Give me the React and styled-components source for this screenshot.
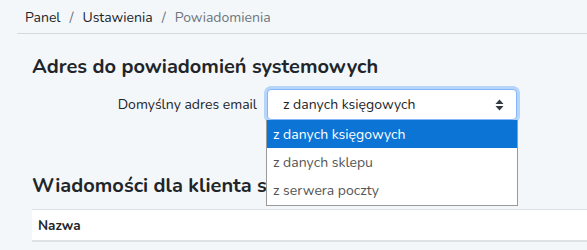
import React from "react";
import styled, { createGlobalStyle } from "styled-components";

const GlobalStyle = createGlobalStyle`
  html, body {
    margin: 0;
    padding: 0;
    background: #f4f7fa;
    font-family: "Nunito", "Noto Sans", "Open Sans", sans-serif;
    color: #212529;
    overflow: hidden;
  }
`;

const Page = styled.div`
  width: 587px;
  height: 250px;
  overflow: hidden;
`;

const Breadcrumb = styled.nav`
  margin-left: 17px;
  height: 32px;
  padding-left: 8px;
  display: flex;
  align-items: center;
  gap: 8px;
  font-size: 14px;
  border-bottom: 1px solid #d5d9de;
  padding-top: 1px;
`;

const Crumb = styled.span`
  color: ${(p) => (p.$active ? "#6c757d" : "#212529")};
`;

const Sep = styled.span`
  color: #6c757d;
  padding: 0 1px;
`;

const Content = styled.div`
  padding-left: 32px;
`;

const Heading = styled.h2`
  margin: 0;
  font-size: 20px;
  font-weight: 700;
  line-height: 24px;
  color: #212529;
  padding-top: ${(p) => p.$top}px;
  white-space: nowrap;
`;

const FormRow = styled.div`
  display: flex;
  align-items: center;
  gap: 10px;
  margin-top: 10px;
`;

const Label = styled.label`
  width: 225px;
  text-align: right;
  font-size: 14px;
  color: #212529;
`;

const SelectWrap = styled.div`
  position: relative;
  width: 250px;
`;

const SelectBox = styled.div`
  height: 31px;
  box-sizing: border-box;
  background: #fff;
  border: 1px solid #86b7fe;
  border-radius: 4px;
  box-shadow: 0 0 0 3px #b6d5fb;
  display: flex;
  align-items: center;
  justify-content: space-between;
  padding: 0 12px 0 15px;
  font-size: 14px;
  color: #212529;
`;

const Options = styled.ul`
  position: absolute;
  top: 31px;
  left: -1px;
  width: 250px;
  margin: 0;
  padding: 0;
  list-style: none;
  background: #fff;
  border: 1px solid #9a9a9a;
  border-top: none;
  z-index: 5;
`;

const Option = styled.li`
  height: 28.3px;
  display: flex;
  align-items: center;
  padding-left: 6px;
  font-size: 14px;
  background: ${(p) => (p.$selected ? "#0b74d5" : "#fff")};
  color: ${(p) => (p.$selected ? "#fff" : "#555")};
`;

const Table = styled.div`
  margin-top: 11px;
  background: #fff;
  border-top: 1px solid #dee2e6;
  border-bottom: 2px solid #dee2e6;
  height: 30px;
  display: flex;
  align-items: center;
  padding-left: 6px;
`;

const HeadCell = styled.span`
  font-weight: 700;
  font-size: 13.5px;
  color: #212529;
`;

const Arrows = () => (
  <svg width="9" height="12" viewBox="0 0 9 12" fill="#343a40">
    <path d="M4.5 0.5 L8.5 5 H0.5 Z" />
    <path d="M4.5 11.5 L8.5 7 H0.5 Z" />
  </svg>
);

export default function App() {
  return (
    <Page>
      <GlobalStyle />
      <Breadcrumb>
        <Crumb>Panel</Crumb>
        <Sep>/</Sep>
        <Crumb>Ustawienia</Crumb>
        <Sep>/</Sep>
        <Crumb $active>Powiadomienia</Crumb>
      </Breadcrumb>
      <Content>
        <Heading $top={21}>Adres do powiadomień systemowych</Heading>
        <FormRow>
          <Label>Domyślny adres email</Label>
          <SelectWrap>
            <SelectBox>
              <span>z danych księgowych</span>
              <Arrows />
            </SelectBox>
            <Options>
              <Option $selected>z danych księgowych</Option>
              <Option>z danych sklepu</Option>
              <Option>z serwera poczty</Option>
            </Options>
          </SelectWrap>
        </FormRow>
        <Heading $top={54}>Wiadomości dla klienta sklepu</Heading>
        <Table>
          <HeadCell>Nazwa</HeadCell>
        </Table>
      </Content>
    </Page>
  );
}
